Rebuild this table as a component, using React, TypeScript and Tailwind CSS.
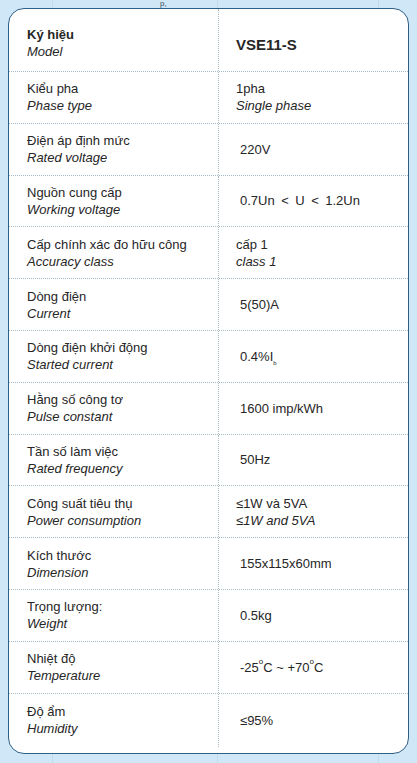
import * as React from 'react';

type Spec = {
  vi: string;
  en: string;
  value: React.ReactNode;
  valueEn?: string;
};

const specs: Spec[] = [
  { vi: 'Kiểu pha', en: 'Phase type', value: '1pha', valueEn: 'Single phase' },
  { vi: 'Điện áp định mức', en: 'Rated voltage', value: '220V' },
  { vi: 'Nguồn cung cấp', en: 'Working voltage', value: '0.7Un\u2002<\u2002U\u2002<\u20021.2Un' },
  { vi: 'Cấp chính xác đo hữu công', en: 'Accuracy class', value: 'cấp 1', valueEn: 'class 1' },
  { vi: 'Dòng điện', en: 'Current', value: '5(50)A' },
  {
    vi: 'Dòng điện khởi động',
    en: 'Started current',
    value: (
      <>
        0.4%I<sub className="text-[6px] align-[-3px]">b</sub>
      </>
    ),
  },
  { vi: 'Hằng số công tơ', en: 'Pulse constant', value: '1600 imp/kWh' },
  { vi: 'Tần số làm việc', en: 'Rated frequency', value: '50Hz' },
  { vi: 'Công suất tiêu thụ', en: 'Power consumption', value: '≤1W và 5VA', valueEn: '≤1W and 5VA' },
  { vi: 'Kích thước', en: 'Dimension', value: '155x115x60mm' },
  { vi: 'Trọng lượng:', en: 'Weight', value: '0.5kg' },
  {
    vi: 'Nhiệt độ',
    en: 'Temperature',
    value: (
      <>
        -25<sup className="text-[8px] align-[4px]">o</sup>C ~ +70<sup className="text-[8px] align-[4px]">o</sup>C
      </>
    ),
  },
  { vi: 'Độ ẩm', en: 'Humidity', value: '≤95%' },
];

function Row({ spec, last }: { spec: Spec; last: boolean }) {
  return (
    <div
      className={
        last
          ? 'flex flex-1 pb-[6px]'
          : 'flex h-[51.8px] border-b border-dotted border-[#a6bac8]'
      }
    >
      <div className="w-[210px] shrink-0 flex flex-col justify-center pl-[18px] border-r border-dotted border-[#a6bac8]">
        <span className="leading-[17px]">{spec.vi}</span>
        <span className="leading-[17px] italic">{spec.en}</span>
      </div>
      <div
        className={
          spec.valueEn
            ? 'flex-1 flex flex-col justify-center pl-[17px]'
            : 'flex-1 flex flex-col justify-center pl-[21px]'
        }
      >
        <span className="leading-[17px]">{spec.value}</span>
        {spec.valueEn && <span className="leading-[17px] italic">{spec.valueEn}</span>}
      </div>
    </div>
  );
}

export default function App() {
  return (
    <div className="relative w-[417px] h-[763px] overflow-hidden bg-[#cfe7f6] pt-2 px-2 font-['Liberation_Sans',Arial,sans-serif] text-[13px] text-[#262626]">
      {/* faint grid of the sheet behind the card */}
      <div className="absolute left-[52px] top-0 h-full w-px bg-[#c0dbec]" />
      <div className="absolute left-[217px] top-0 h-full w-px bg-[#c0dbec]" />
      <div className="absolute left-[378px] top-0 h-full w-px bg-[#c0dbec]" />
      <div className="absolute left-[160px] top-0 text-[8px] leading-[8px] text-[#3a4a58]">p,</div>

      <div className="relative flex flex-col h-[746px] bg-white border-[1.5px] border-[#2f5f85] rounded-[16px] overflow-hidden">
        <div className="flex h-[63px] border-b border-dotted border-[#a6bac8]">
          <div className="w-[210px] shrink-0 flex flex-col justify-center pl-[18px] pt-[6px] border-r border-dotted border-[#a6bac8]">
            <span className="leading-[17px] font-bold">Ký hiệu</span>
            <span className="leading-[17px] italic">Model</span>
          </div>
          <div className="flex-1 flex items-center pl-[17px] pt-[10px]">
            <span className="font-bold text-[15px]">VSE11-S</span>
          </div>
        </div>
        {specs.map((s, i) => (
          <Row key={s.en} spec={s} last={i === specs.length - 1} />
        ))}
      </div>
    </div>
  );
}
